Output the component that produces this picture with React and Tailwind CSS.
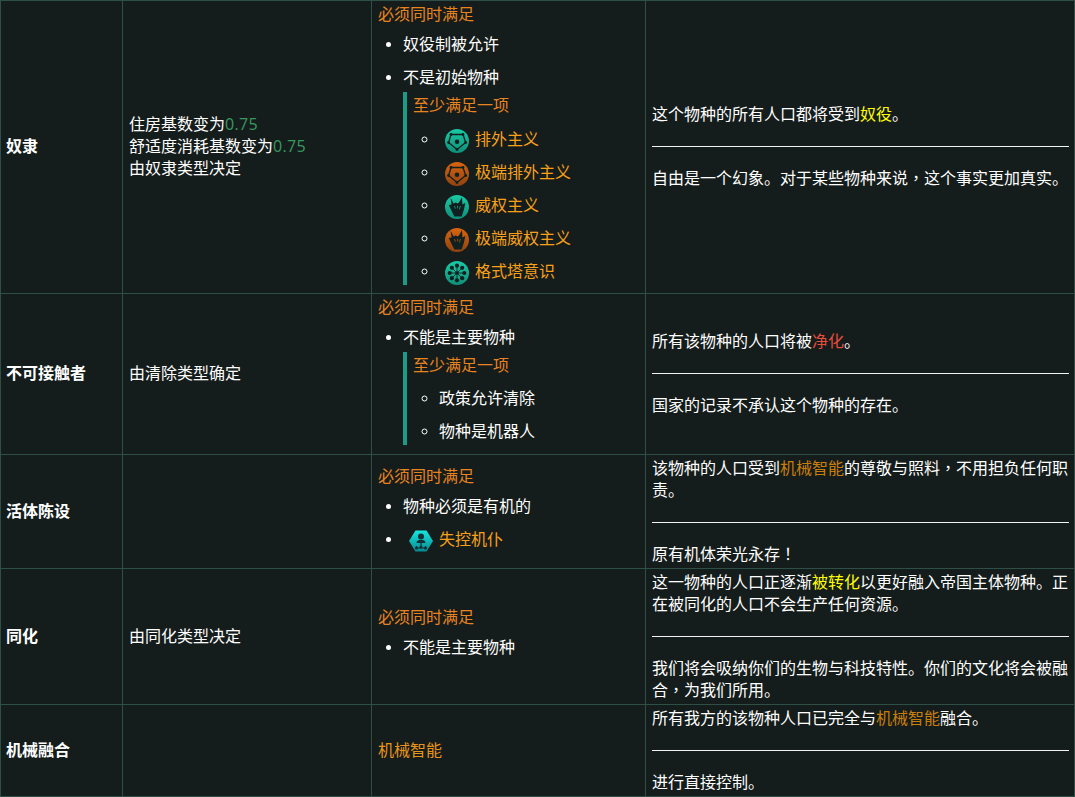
const dark = '#102020';

const Pentagon = () => (
  <>
    <path d="M6 5.5H18L20.7 13.5 12 20.5 3.6 13.5Z" fill="none" stroke={dark} strokeWidth="1.3" />
    {[[6, 5.5], [18, 5.5], [20.7, 13.5], [12, 20.5], [3.6, 13.5]].map(([x, y]) => (
      <circle key={x} cx={x} cy={y} r="1.4" fill={dark} />
    ))}
    <circle cx="12" cy="12.8" r="2.3" fill={dark} />
  </>
);

const Fist = ({ line }) => (
  <>
    <path
      d="M5.5 2.5 8.6 8.6 10.8 7.6 12.6 8.6 14 7.4 17 2 17.4 9.4 20.4 8 18.8 15 16.6 21.5 9.4 21.5 6.6 16 3.8 10 6.6 9.6Z"
      fill={dark}
    />
    <path d="M9.4 11 10.4 13.6M12.6 10.8 12.6 13.4M15.4 11 14.4 14.4" stroke={line} strokeWidth="0.7" fill="none" />
  </>
);

const Gestalt = () => (
  <>
    {[0, 45, 90, 135, 180, 225, 270, 315].map(a => {
      const x = 12 + 7.3 * Math.cos((a * Math.PI) / 180);
      const y = 12 + 7.3 * Math.sin((a * Math.PI) / 180);
      return (
        <g key={a}>
          <line x1="12" y1="12" x2={x} y2={y} stroke={dark} strokeWidth="0.8" />
          <circle cx={x} cy={y} r="2.1" fill={dark} />
        </g>
      );
    })}
    <circle cx="12" cy="12" r="1.8" fill={dark} />
  </>
);

function Ethic({ color, children }) {
  const id = color === 'teal' ? 'tealFill' : 'rustFill';
  return (
    <svg viewBox="0 0 24 24" className="inline-block w-6 h-6 ml-[6px] mr-[6px] align-middle">
      <defs>
        <linearGradient id={id} x1="0" y1="0" x2="0" y2="1">
          <stop offset="0" stopColor={color === 'teal' ? '#19c9a4' : '#d9650f'} />
          <stop offset="1" stopColor={color === 'teal' ? '#0f8f78' : '#8f4210'} />
        </linearGradient>
      </defs>
      <circle cx="12" cy="12" r="12" fill={`url(#${id})`} />
      {children}
    </svg>
  );
}

const RogueServitor = () => (
  <svg viewBox="0 0 24 24" className="inline-block w-6 h-6 ml-[6px] mr-[6px] align-middle">
    <defs>
      <linearGradient id="hexFill" x1="0" y1="0" x2="0" y2="1">
        <stop offset="0" stopColor="#16e6e0" />
        <stop offset="1" stopColor="#078a90" />
      </linearGradient>
    </defs>
    <path d="M6.5 1.5H17.5L24 12 17.5 22.5H6.5L0 12Z" fill="url(#hexFill)" />
    <circle cx="12" cy="7.5" r="3" fill="#123038" />
    <path d="M7.5 14c0-2.5 2-3.2 4.5-3.2s4.5.7 4.5 3.2Z" fill="#123038" />
    <path d="M12 14v3M7.5 19h9M7.5 17v2M16.5 17v2" stroke="#123038" strokeWidth="1.2" fill="none" />
    <circle cx="7.5" cy="19" r="1.6" fill="#123038" />
    <circle cx="16.5" cy="19" r="1.6" fill="#123038" />
    <circle cx="12" cy="18" r="1.6" fill="#123038" />
  </svg>
);

const ethics = [
  { name: '排外主义', color: 'teal', icon: <Pentagon /> },
  { name: '极端排外主义', color: 'rust', icon: <Pentagon /> },
  { name: '威权主义', color: 'teal', icon: <Fist line="#19b897" /> },
  { name: '极端威权主义', color: 'rust', icon: <Fist line="#c85e10" /> },
  { name: '格式塔意识', color: 'teal', icon: <Gestalt /> },
];

// pb-[4px] lifts the centered text to where the reference has it
const cell = 'border border-[#2d4f45] align-middle pl-[6px] pr-[5px] pt-0 pb-[4px]';
const discs = 'list-disc pl-[25px] mt-[8px] marker:text-[13px]';
const circles = 'list-[circle] pl-[26px] marker:text-[13px]';
const box = 'border-l-4 border-[#1c9c86] pl-[6px] mt-[5px] pt-[1px]';
const Must = ({ children }) => <div className="text-[#e8841f]">{children}</div>;
const Link = ({ children }) => <span className="text-[#f7a01a]">{children}</span>;
const Num = () => <span className="text-[#359a5f] leading-none tracking-[0.3px] font-['Open_Sans',sans-serif]">0.75</span>;
// these two marks sit in the middle of their square in the reference
const Mark = ({ children }) => <span className="font-['Noto_Sans_CJK_TC',sans-serif]">{children}</span>;

function Flavor({ children, quote }) {
  return (
    <>
      <div>{children}</div>
      <hr className="mt-[22px] mb-[19px] border-[#f2f2f2]" />
      <div>{quote}</div>
    </>
  );
}

function Row({ height, name, effect, req, desc }) {
  return (
    <tr style={{ height }}>
      <th className={`${cell} !pl-[5px] text-left font-bold`}>{name}</th>
      <td className={cell}>{effect}</td>
      <td className={cell}>{req}</td>
      <td className={cell}>{desc}</td>
    </tr>
  );
}

export default function App() {
  return (
    <div className="w-[1075px] h-[797px] overflow-hidden bg-[#151d1c] text-white text-base leading-[22px] font-['Noto_Sans_CJK_SC',sans-serif]">
      <table className="table-fixed border-collapse w-[1075px] bg-[#151d1c]">
        <colgroup>
          <col className="w-[122px]" />
          <col className="w-[249px]" />
          <col className="w-[274px]" />
          <col />
        </colgroup>
        <tbody>
          <Row
            height={293}
            name="奴隶"
            effect={
              <>
                住房基数变为<Num /><br />
                舒适度消耗基数变为<Num /><br />
                由奴隶类型决定
              </>
            }
            req={
              <>
                <Must>必须同时满足</Must>
                <ul className={`${discs} mb-[3px]`}>
                  <li className="mb-[11px]">奴役制被允许</li>
                  <li>
                    不是初始物种
                    <div className={`${box} h-[193px]`}>
                      <Must>至少满足一项</Must>
                      <ul className={`${circles} mt-[7px]`}>
                        {ethics.map(e => (
                          <li key={e.name} className="h-[33px] leading-[33px]">
                            <Ethic color={e.color}>{e.icon}</Ethic>
                            <Link>{e.name}</Link>
                          </li>
                        ))}
                      </ul>
                    </div>
                  </li>
                </ul>
              </>
            }
            desc={
              <Flavor quote={<>自由是一个幻象。对于某些物种来说<Mark>，</Mark>这个事实更加真实。</>}>
                这个物种的所有人口都将受到<span className="text-[#ffff00]">奴役</span>。
              </Flavor>
            }
          />
          <Row
            height={161}
            name="不可接触者"
            effect="由清除类型确定"
            req={
              <>
                <Must>必须同时满足</Must>
                <ul className={`${discs} mb-[4px]`}>
                  <li>
                    不能是主要物种
                    <div className={`${box} h-[93px]`}>
                      <Must>至少满足一项</Must>
                      <ul className={`${circles} mt-[6px]`}>
                        <li className="h-[33px] leading-[33px]">政策允许清除</li>
                        <li className="h-[33px] leading-[33px]">物种是机器人</li>
                      </ul>
                    </div>
                  </li>
                </ul>
              </>
            }
            desc={
              <Flavor quote="国家的记录不承认这个物种的存在。">
                所有该物种的人口将被<span className="text-[#e74c3c]">净化</span>。
              </Flavor>
            }
          />
          <Row
            height={114}
            name="活体陈设"
            req={
              <>
                <Must>必须同时满足</Must>
                <ul className={discs}>
                  <li className="mb-[6px]">物种必须是有机的</li>
                  <li className="h-[33px] leading-[33px]">
                    <RogueServitor />
                    <Link>失控机仆</Link>
                  </li>
                </ul>
              </>
            }
            desc={
              <Flavor quote={<>原有机体荣光永存<Mark>！</Mark></>}>
                该物种的人口受到<span className="text-[#c87f0a]">机械智能</span>的尊敬与照料<Mark>，</Mark>不用担负任何职责。
              </Flavor>
            }
          />
          <Row
            height={136}
            name="同化"
            effect="由同化类型决定"
            req={
              <>
                <Must>必须同时满足</Must>
                <ul className={`${discs} mb-[8px]`}>
                  <li>不能是主要物种</li>
                </ul>
              </>
            }
            desc={
              <Flavor quote={<>我们将会吸纳你们的生物与科技特性。你们的文化将会被融合<Mark>，</Mark>为我们所用。</>}>
                这一物种的人口正逐渐<span className="text-[#ffff00]">被转化</span>以更好融入帝国主体物种。正在被同化的人口不会生产任何资源。
              </Flavor>
            }
          />
          <Row
            height={92}
            name="机械融合"
            req={<span className="text-[#e8941a]">机械智能</span>}
            desc={
              <Flavor quote="进行直接控制。">
                所有我方的该物种人口已完全与<span className="text-[#c87f0a]">机械智能</span>融合。
              </Flavor>
            }
          />
        </tbody>
      </table>
    </div>
  );
}
